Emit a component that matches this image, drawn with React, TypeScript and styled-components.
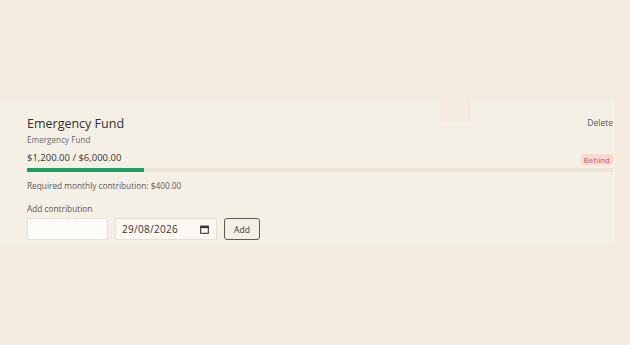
import styled, { createGlobalStyle } from "styled-components";

const GlobalStyle = createGlobalStyle`
  html, body {
    margin: 0;
    padding: 0;
    background: #f3ebdf;
    font-family: "Open Sans", "Noto Sans", sans-serif;
    color: #333;
  }
`;

const Page = styled.main`
  padding-top: 100px;
  height: 245px;
`;

const Card = styled.section`
  position: relative;
  width: 615px;
  height: 145px;
  box-sizing: border-box;
  background: #f5f0e5;
  padding: 15px 2px 0 27px;
`;

const Notch = styled.div`
  position: absolute;
  left: 440px;
  top: 0;
  width: 31px;
  height: 21px;
  background: #f3ebdf;
`;

const HeaderRow = styled.div`
  display: flex;
  justify-content: space-between;
  align-items: flex-start;
`;

const Title = styled.h2`
  margin: 0;
  font-size: 12.5px;
  font-weight: 400;
  line-height: 18px;
  color: #2e2e2e;
`;

const DeleteButton = styled.button`
  border: none;
  background: none;
  padding: 0;
  margin-top: 2px;
  font-family: inherit;
  font-size: 8.5px;
  color: #555;
  cursor: pointer;
`;

const Subtitle = styled.p`
  margin: 1px 0 0;
  font-size: 8.2px;
  line-height: 12px;
  color: #6a6a6a;
`;

const AmountRow = styled.div`
  display: flex;
  justify-content: space-between;
  align-items: flex-end;
  margin-top: 5px;
`;

const Amount = styled.span`
  font-size: 9.5px;
  line-height: 14px;
  color: #333;
`;

const Badge = styled.span`
  background: #f8d9d2;
  color: #c4625a;
  font-size: 8px;
  line-height: 11px;
  padding: 0 3px;
  border-radius: 2px;
`;

const Track = styled.div`
  margin-top: 3px;
  height: 4px;
  background: #ebe4d5;
`;

const Fill = styled.div`
  height: 100%;
  background: #1f9e64;
`;

const Note = styled.p`
  margin: 8px 0 0;
  font-size: 8.3px;
  line-height: 12px;
  color: #5a5a5a;
`;

const Label = styled.label`
  display: block;
  margin-top: 11px;
  font-size: 8.3px;
  line-height: 12px;
  color: #555;
`;

const FormRow = styled.div`
  display: flex;
  gap: 7px;
  margin-top: 3px;
`;

const AmountInput = styled.input`
  width: 81px;
  height: 22px;
  box-sizing: border-box;
  border: 1px solid #e6e0d4;
  border-radius: 2px;
  background: #fdfcf9;
  outline: none;
`;

const DateBox = styled.div`
  display: flex;
  align-items: center;
  justify-content: space-between;
  width: 102px;
  height: 22px;
  box-sizing: border-box;
  padding: 0 7px 0 6px;
  border: 1px solid #e6e0d4;
  border-radius: 2px;
  background: #fbf8f2;
  font-size: 10px;
  letter-spacing: 0.3px;
  color: #333;
`;

const AddButton = styled.button`
  width: 36px;
  height: 22px;
  box-sizing: border-box;
  border: 1px solid #5a5a5a;
  border-radius: 3px;
  background: #f5f0e5;
  font-family: inherit;
  font-size: 8.5px;
  color: #333;
  padding: 0;
`;

function CalendarIcon() {
  return (
    <svg width="9" height="9" viewBox="0 0 10 10" aria-hidden>
      <rect x="0.75" y="1.25" width="8.5" height="8" fill="none" stroke="#333" strokeWidth="1.2" />
      <rect x="0.75" y="1.25" width="8.5" height="2.2" fill="#333" />
    </svg>
  );
}

export default function App() {
  const current = 1200;
  const target = 6000;
  return (
    <>
      <GlobalStyle />
      <Page>
        <Card>
          <Notch />
          <HeaderRow>
            <Title>Emergency Fund</Title>
            <DeleteButton>Delete</DeleteButton>
          </HeaderRow>
          <Subtitle>Emergency Fund</Subtitle>
          <AmountRow>
            <Amount>$1,200.00 / $6,000.00</Amount>
            <Badge>Behind</Badge>
          </AmountRow>
          <Track>
            <Fill style={{ width: `${(current / target) * 100}%` }} />
          </Track>
          <Note>Required monthly contribution: $400.00</Note>
          <Label>Add contribution</Label>
          <FormRow>
            <AmountInput type="text" />
            <DateBox>
              <span>29/08/2026</span>
              <CalendarIcon />
            </DateBox>
            <AddButton>Add</AddButton>
          </FormRow>
        </Card>
      </Page>
    </>
  );
}
